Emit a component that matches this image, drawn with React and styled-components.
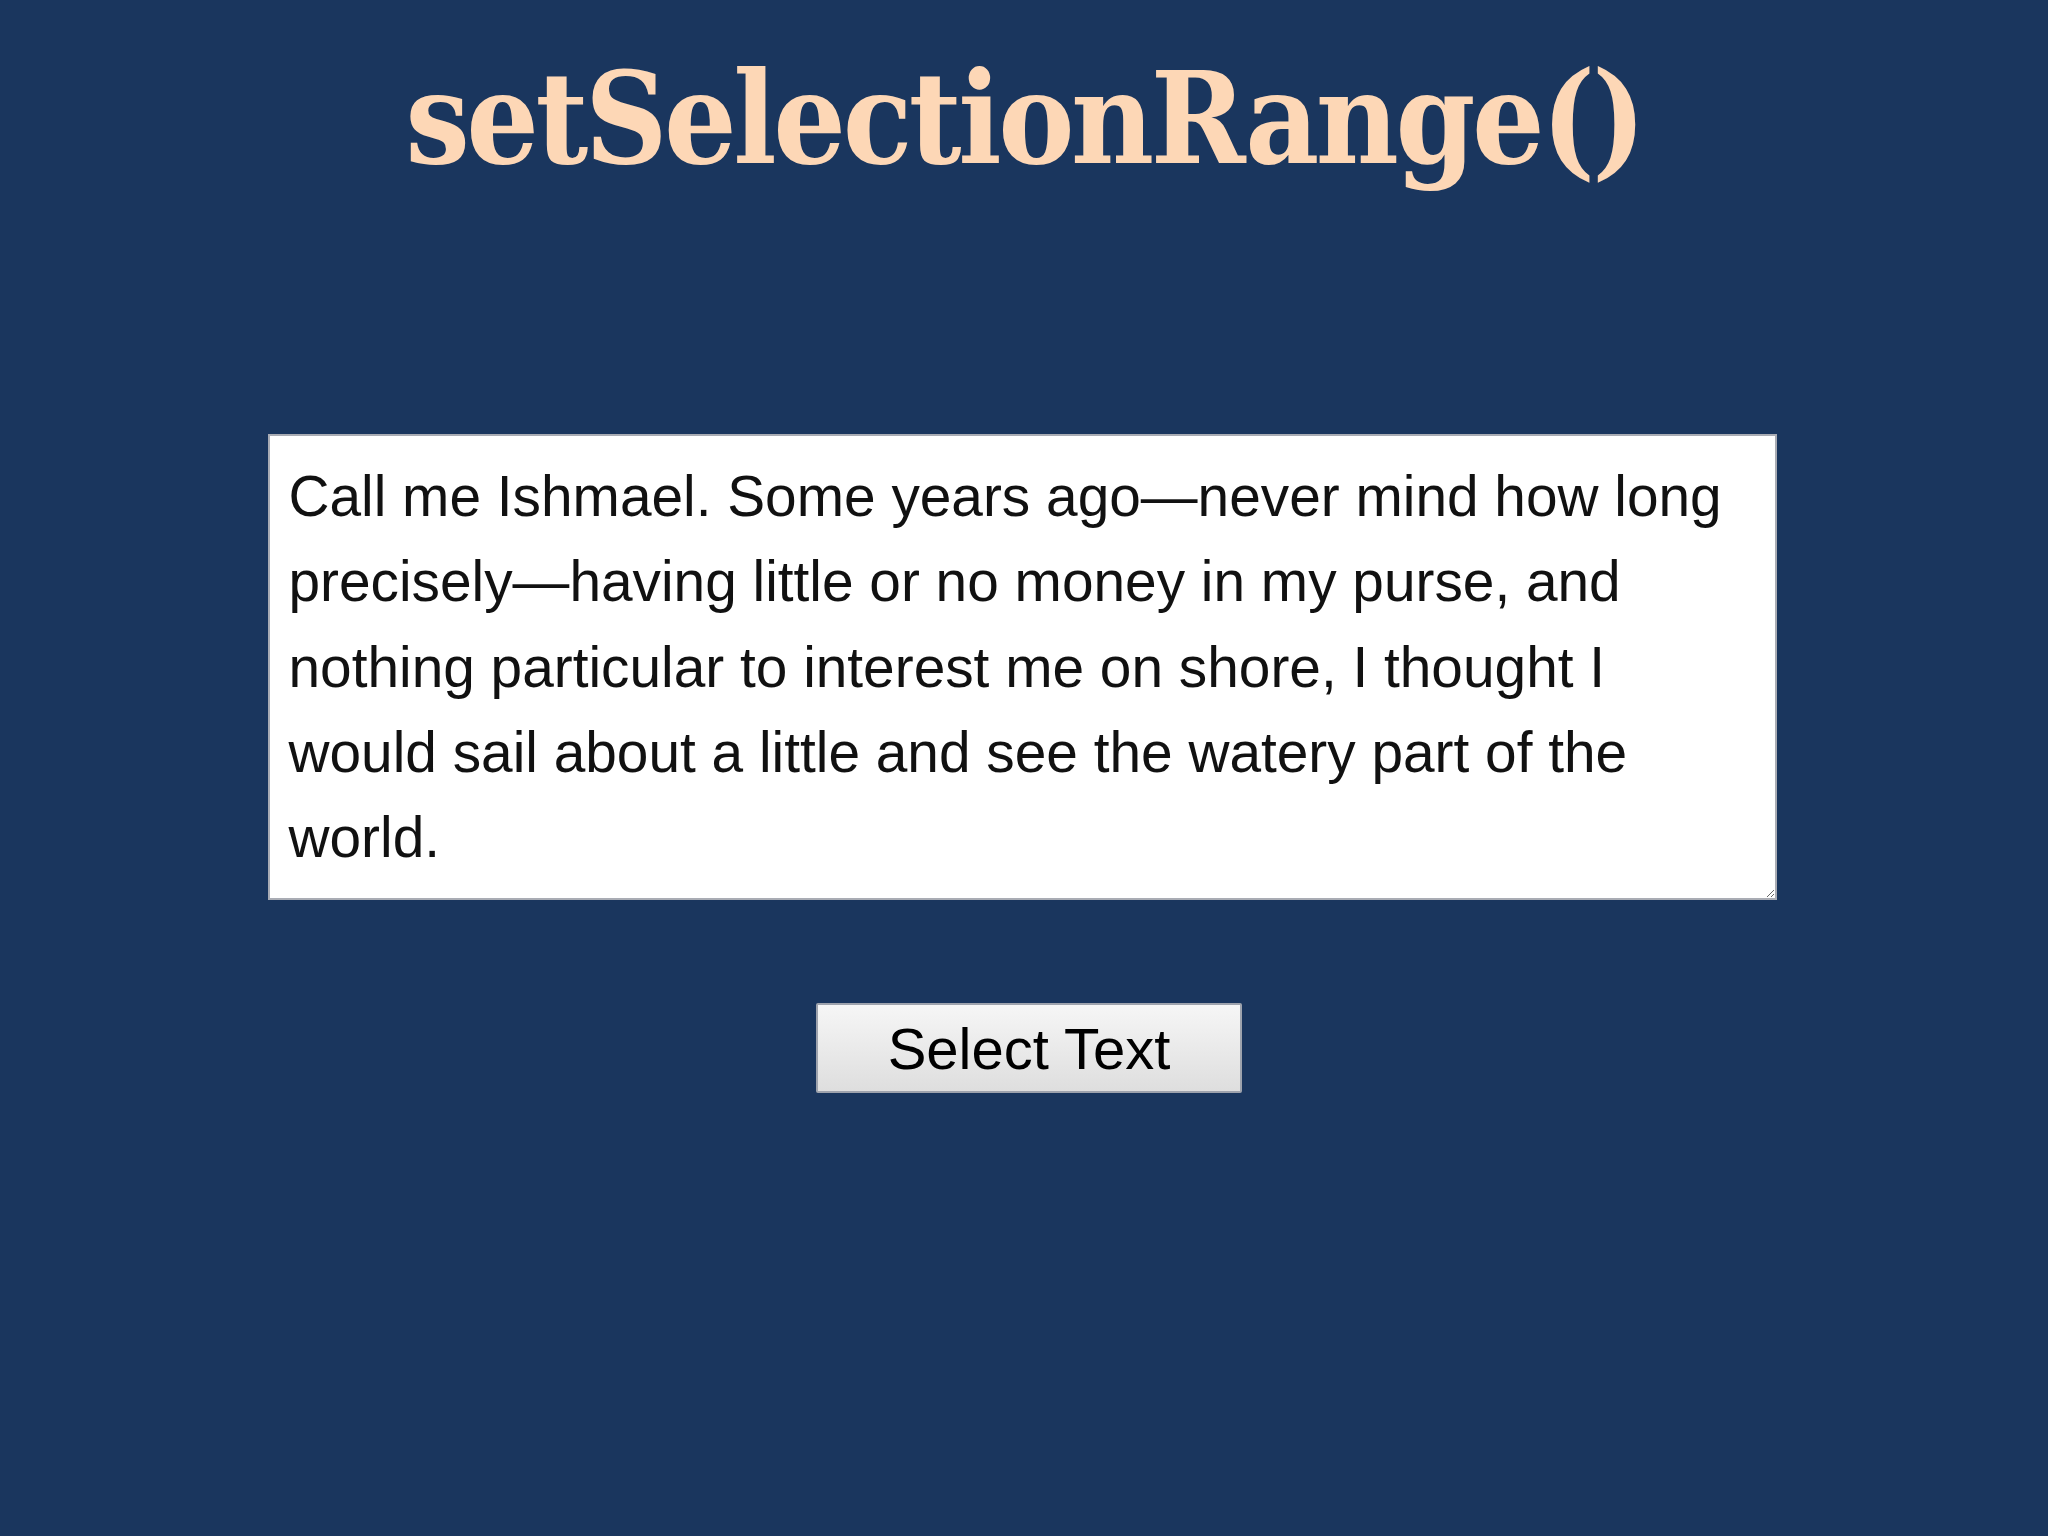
import React from 'react';
import styled, { createGlobalStyle } from 'styled-components';

const GlobalStyle = createGlobalStyle`
  html, body {
    margin: 0;
    padding: 0;
    background: #1a365e;
  }
  body {
    min-height: 1536px;
  }
`;

const Slide = styled.div`
  display: flex;
  flex-direction: column;
  align-items: center;
  width: 2048px;
  height: 1536px;
  background: #1a365e;
`;

const Title = styled.h1`
  margin: 44px 0 0;
  font-family: 'DejaVu Serif', serif;
  font-stretch: condensed;
  font-weight: bold;
  font-size: 127px;
  line-height: 150px;
  letter-spacing: -3.4px;
  color: #fdd7b6;
`;

const TextBox = styled.textarea`
  box-sizing: border-box;
  width: 1509px;
  height: 466px;
  margin: 240px 4px 0 0;
  padding: 18px 19px 16px;
  border: 2px solid #a9acb4;
  background: #fff;
  color: #111;
  font-family: 'Liberation Sans', Arial, sans-serif;
  font-size: 56.8px;
  line-height: 85.3px;
  outline: none;
`;

const Button = styled.button`
  box-sizing: border-box;
  width: 426px;
  height: 90px;
  margin-top: 103px;
  margin-left: 10px;
  border: 2px solid #9ea3ad;
  border-radius: 2px;
  background: linear-gradient(#f6f6f6, #dedede);
  color: #000;
  font-family: 'Liberation Sans', Arial, sans-serif;
  font-size: 58px;
  cursor: pointer;
`;

const text =
  'Call me Ishmael. Some years ago\u2014never mind how long precisely\u2014having little or no money in my purse, and nothing particular to interest me on shore, I thought I would sail about a little and see the watery part of the world.';

export default function App() {
  return (
    <>
      <GlobalStyle />
      <Slide>
        <Title>setSelectionRange()</Title>
        <TextBox defaultValue={text} spellCheck={false} />
        <Button>Select Text</Button>
      </Slide>
    </>
  );
}
